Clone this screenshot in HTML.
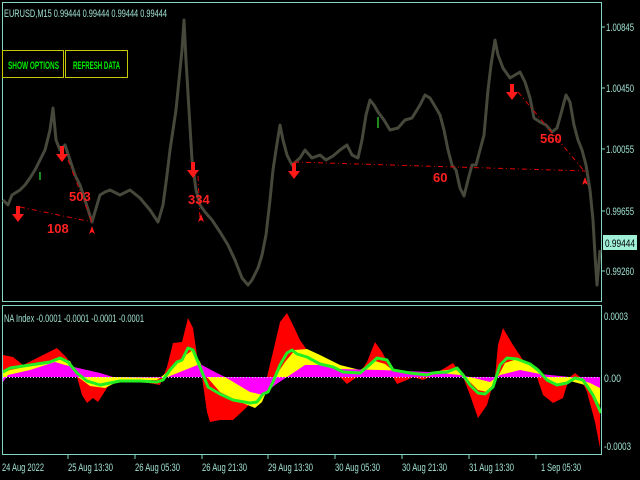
<!DOCTYPE html>
<html><head><meta charset="utf-8"><style>
html,body{margin:0;padding:0;background:#000;width:640px;height:480px;overflow:hidden}
svg{display:block}
text{font-family:"Liberation Sans",sans-serif}
</style></head><body>
<svg width="640" height="480" viewBox="0 0 640 480" xmlns="http://www.w3.org/2000/svg">
<defs><clipPath id="c"><rect x="3" y="306" width="598" height="148"/></clipPath></defs>
<rect width="640" height="480" fill="#000"/>
<rect x="2.5" y="2.5" width="599" height="299" fill="none" stroke="#80d8c4" stroke-width="1"/>
<rect x="2.5" y="305.5" width="599" height="149" fill="none" stroke="#80d8c4" stroke-width="1"/>
<polyline fill="none" stroke="#45483a" stroke-width="3" stroke-linejoin="round" points="3,200 8,205 12,195 20,190 25,185 30,178 35,170 40,160 45,150 50,130 53,108 56,140 60,150 65,145 70,160 75,175 80,185 85,200 92,222 97,205 100,195 105,192 110,190 120,195 130,190 140,198 150,210 158,222 163,205 167,175 170,150 173,130 176,110 179,80 182,50 184,20 186,60 189,110 192,160 196,190 200,205 205,212 212,220 220,232 228,245 235,260 242,278 248,285 252,280 258,268 262,255 266,235 270,200 273,170 276,150 280,125 283,140 287,155 292,165 300,158 305,150 312,158 320,155 326,160 333,156 340,150 347,145 352,155 358,158 362,140 366,115 370,100 374,105 378,112 384,120 390,130 398,128 405,120 412,118 420,105 425,95 430,98 436,108 440,115 444,130 448,150 452,165 456,170 460,188 464,196 468,180 472,165 476,165 480,150 484,135 488,90 491,65 495,40 498,55 503,68 510,78 515,75 520,72 525,82 530,98 534,118 540,122 546,125 552,132 557,128 562,110 566,95 570,102 574,125 578,140 582,150 586,165 590,190 593,220 595,255 597,285 600,250"/>
<line x1="40" y1="172" x2="40" y2="180" stroke="#1e8a1e" stroke-width="2"/>
<line x1="378" y1="117" x2="378" y2="128" stroke="#1e8a1e" stroke-width="2"/>
<g stroke="#e00000" stroke-width="1" stroke-dasharray="5,3,1,3" fill="none">
<line x1="20" y1="207" x2="92" y2="222"/>
<line x1="68" y1="160" x2="92" y2="222"/>
<line x1="294" y1="162" x2="585" y2="171"/>
<line x1="518" y1="92" x2="585" y2="172"/>
<line x1="198" y1="176" x2="200" y2="220"/>
</g>
<g fill="#ff1a1a">
<path d="M16,206 h4 v8 h4 l-6,8 l-6,-8 h4z"/>
<path d="M60,146 h4 v8 h4 l-6,8 l-6,-8 h4z"/>
<path d="M191,162 h4 v8 h4 l-6,8 l-6,-8 h4z"/>
<path d="M292,163 h4 v8 h4 l-6,8 l-6,-8 h4z"/>
<path d="M510,84 h4 v8 h4 l-6,8 l-6,-8 h4z"/>
<path d="M92,226 l3,8 l-3,-2 l-3,2z"/>
<path d="M201,214 l3,8 l-3,-2 l-3,2z"/>
<path d="M585,177 l3,8 l-3,-2 l-3,2z"/>
</g>
<g fill="#ff2020" font-weight="bold" font-size="13">
<text x="47" y="233">108</text>
<text x="69" y="201">503</text>
<text x="188" y="204">334</text>
<text x="433" y="182">60</text>
<text x="540" y="143">560</text>
</g>
<text x="4" y="17" fill="#9fe0d0" font-size="11" textLength="163" lengthAdjust="spacingAndGlyphs">EURUSD,M15  0.99444 0.99444 0.99444 0.99444</text>
<rect x="2.5" y="50.5" width="61" height="27" fill="#000" stroke="#c8c800"/>
<rect x="65.5" y="50.5" width="62" height="27" fill="#000" stroke="#c8c800"/>
<text x="8" y="69" fill="#00ee00" font-weight="bold" font-size="11" textLength="51" lengthAdjust="spacingAndGlyphs">SHOW OPTIONS</text>
<text x="73" y="69" fill="#00ee00" font-weight="bold" font-size="11" textLength="47" lengthAdjust="spacingAndGlyphs">REFRESH DATA</text>
<g fill="#9fe0d0" font-size="11">
<text x="606" y="31" textLength="28" lengthAdjust="spacingAndGlyphs">1.00845</text>
<text x="606" y="92" textLength="28" lengthAdjust="spacingAndGlyphs">1.00450</text>
<text x="606" y="153" textLength="28" lengthAdjust="spacingAndGlyphs">1.00055</text>
<text x="606" y="215" textLength="28" lengthAdjust="spacingAndGlyphs">0.99655</text>
<text x="606" y="275" textLength="28" lengthAdjust="spacingAndGlyphs">0.99260</text>
</g>
<g stroke="#80d8c4"><line x1="602" y1="27" x2="605" y2="27"/><line x1="602" y1="88" x2="605" y2="88"/><line x1="602" y1="149" x2="605" y2="149"/><line x1="602" y1="211" x2="605" y2="211"/><line x1="602" y1="271" x2="605" y2="271"/></g>
<rect x="603" y="235" width="34" height="15" fill="#a0f0d8"/>
<text x="605" y="247" fill="#000" font-size="11" textLength="30" lengthAdjust="spacingAndGlyphs">0.99444</text>
<text x="4" y="322" fill="#9fe0d0" font-size="11" textLength="140" lengthAdjust="spacingAndGlyphs">NA Index -0.0001 -0.0001 -0.0001 -0.0001</text>
<g clip-path="url(#c)">
<polygon fill="#ff0000" points="3,377 3,355 13,357 23,365 37,358 57,348 67,358 77,377 82,395 87,403 93,398 98,402 107,388 113,377 160,385 167,367 173,343 182,342 188,318 193,328 198,362 202,377 207,412 210,422 220,420 233,420 247,407 257,393 267,377 273,352 280,322 287,313 293,325 300,340 307,350 320,365 340,377 347,384 357,377 367,362 375,342 382,352 388,363 393,377 397,384 407,380 413,377 423,380 430,377 453,363 463,377 470,395 478,418 487,405 495,377 498,345 503,328 513,345 523,360 533,372 537,377 543,395 553,403 563,398 567,385 570,377 575,373 580,377 587,392 595,422 600,448 600,377"/>
<polygon fill="#ffff00" points="3,377 3,373 10,370 40,364 60,359 70,361 78,377 90,386 105,388 115,383 125,380 157,380 170,370 183,357 193,350 200,362 207,377 220,392 240,402 255,408 262,402 267,390 275,377 285,362 295,350 307,349 320,355 340,365 360,370 375,361 385,364 395,372 430,372 455,369 465,377 478,390 487,392 495,382 505,363 517,359 530,364 545,377 555,384 570,381 585,385 600,405 600,377"/>
<polygon fill="#ff00ff" points="3,377 3,382 8,375 30,370 55,362 65,365 100,373 113,377 165,378 185,370 200,364 215,372 225,377 250,392 263,395 275,385 290,375 305,365 320,365 340,369 380,370 430,372 460,375 470,377 490,382 500,375 520,370 540,374 570,377 590,383 600,388 600,377"/>
<line x1="3" y1="377.5" x2="600" y2="377.5" stroke="#c8c8ff" stroke-width="1" stroke-dasharray="1,2"/>
<polyline fill="none" stroke="#22ee22" stroke-width="3" stroke-linejoin="round" points="3,372 10,368 30,365 50,362 60,358 68,362 77,373 87,381 100,385 110,383 120,381 140,381 157,382 163,380 170,370 177,362 182,360 188,348 193,350 200,367 208,387 220,394 233,400 250,403 257,402 263,394 268,392 273,382 280,365 287,353 292,350 297,354 307,357 320,364 333,367 343,372 360,373 367,367 377,358 387,360 393,370 410,373 427,375 433,373 447,372 457,368 463,375 470,385 478,393 485,394 493,387 500,365 507,358 517,359 530,364 538,370 547,380 557,385 567,383 575,378 583,380 593,395 601,413"/>
</g>
<g fill="#9fe0d0" font-size="11">
<text x="604" y="320" textLength="24" lengthAdjust="spacingAndGlyphs">0.0003</text>
<text x="604" y="382" textLength="17" lengthAdjust="spacingAndGlyphs">0.00</text>
<text x="604" y="450" textLength="27" lengthAdjust="spacingAndGlyphs">-0.0003</text>
</g>
<g stroke="#80d8c4"><line x1="68" y1="455" x2="68" y2="459"/><line x1="135" y1="455" x2="135" y2="459"/><line x1="202" y1="455" x2="202" y2="459"/><line x1="268" y1="455" x2="268" y2="459"/><line x1="335" y1="455" x2="335" y2="459"/><line x1="402" y1="455" x2="402" y2="459"/><line x1="469" y1="455" x2="469" y2="459"/><line x1="536" y1="455" x2="536" y2="459"/></g>
<g fill="#9fe0d0" font-size="11">
<text x="2" y="471" textLength="42" lengthAdjust="spacingAndGlyphs">24 Aug 2022</text>
<text x="68" y="471" textLength="45" lengthAdjust="spacingAndGlyphs">25 Aug 13:30</text>
<text x="135" y="471" textLength="45" lengthAdjust="spacingAndGlyphs">26 Aug 05:30</text>
<text x="202" y="471" textLength="45" lengthAdjust="spacingAndGlyphs">26 Aug 21:30</text>
<text x="268" y="471" textLength="45" lengthAdjust="spacingAndGlyphs">29 Aug 13:30</text>
<text x="335" y="471" textLength="45" lengthAdjust="spacingAndGlyphs">30 Aug 05:30</text>
<text x="402" y="471" textLength="45" lengthAdjust="spacingAndGlyphs">30 Aug 21:30</text>
<text x="469" y="471" textLength="45" lengthAdjust="spacingAndGlyphs">31 Aug 13:30</text>
<text x="541" y="471" textLength="40" lengthAdjust="spacingAndGlyphs">1 Sep 05:30</text>
</g>
</svg>
</body></html>
